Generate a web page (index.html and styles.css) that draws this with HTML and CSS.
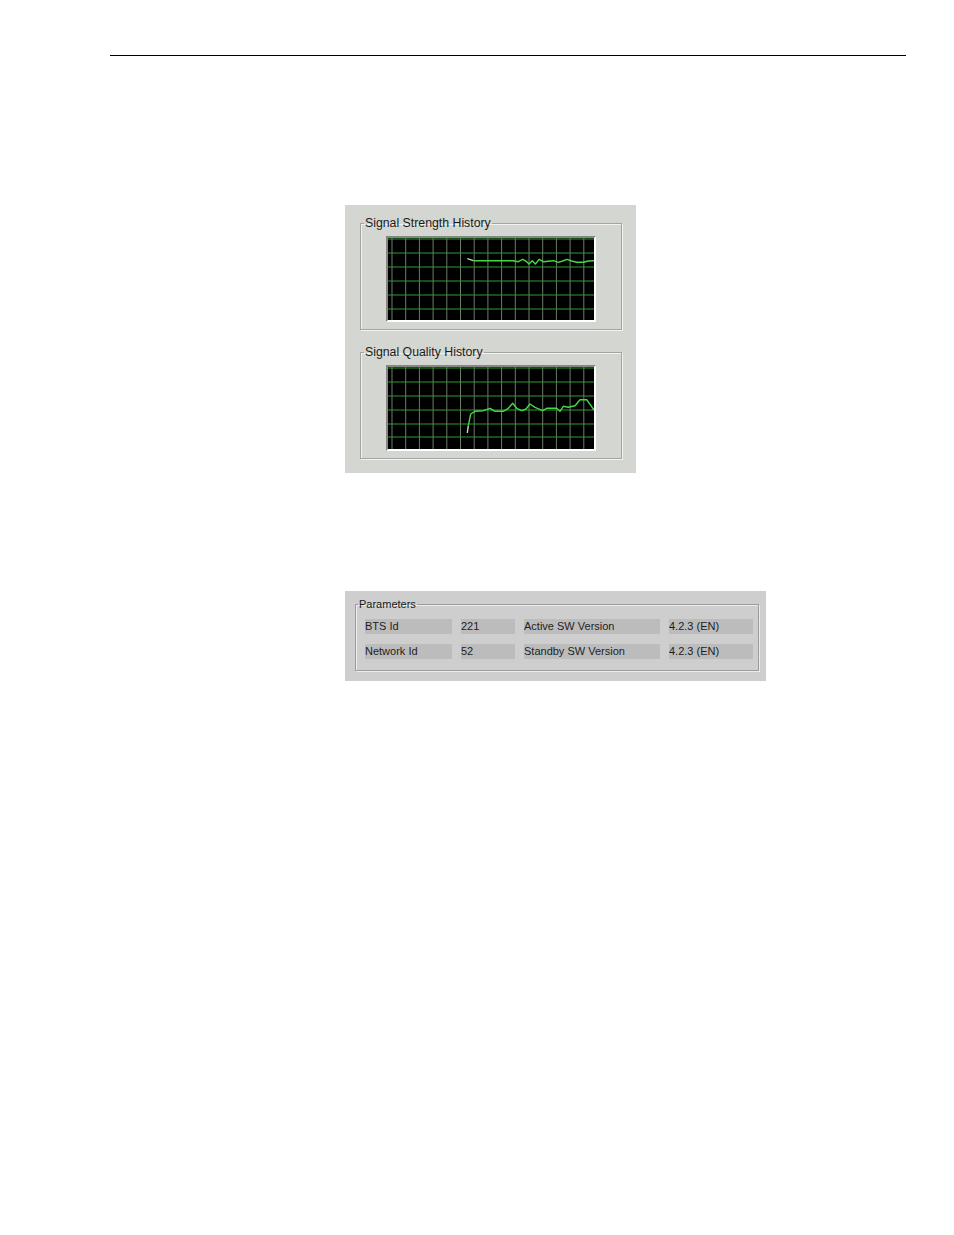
FILE: index.html
```html
<!DOCTYPE html>
<html>
<head>
<meta charset="utf-8">
<link rel="stylesheet" href="styles.css">
</head>
<body>
<div class="page">
  <div class="rule"></div>

  <div class="panel history">
    <fieldset class="group">
      <legend>Signal Strength History</legend>
      <div class="chart">
        <svg width="206" height="82" viewBox="0 0 206 82">
          <g class="vgrid">
            <line x1="4" y1="0" x2="4" y2="82"/><line x1="17.7" y1="0" x2="17.7" y2="82"/>
            <line x1="31.4" y1="0" x2="31.4" y2="82"/><line x1="45.1" y1="0" x2="45.1" y2="82"/>
            <line x1="58.8" y1="0" x2="58.8" y2="82"/><line x1="72.5" y1="0" x2="72.5" y2="82"/>
            <line x1="86.2" y1="0" x2="86.2" y2="82"/><line x1="99.9" y1="0" x2="99.9" y2="82"/>
            <line x1="113.6" y1="0" x2="113.6" y2="82"/><line x1="127.3" y1="0" x2="127.3" y2="82"/>
            <line x1="141" y1="0" x2="141" y2="82"/><line x1="154.7" y1="0" x2="154.7" y2="82"/>
            <line x1="168.4" y1="0" x2="168.4" y2="82"/><line x1="182.1" y1="0" x2="182.1" y2="82"/>
            <line x1="195.8" y1="0" x2="195.8" y2="82"/>
          </g>
          <g class="hgrid">
            <line x1="0" y1="1" x2="206" y2="1"/><line x1="0" y1="15" x2="206" y2="15"/>
            <line x1="0" y1="29" x2="206" y2="29"/><line x1="0" y1="43" x2="206" y2="43"/>
            <line x1="0" y1="57" x2="206" y2="57"/><line x1="0" y1="71" x2="206" y2="71"/>
          </g>
          <polyline class="start" points="79.3,20.7 85.3,22.7"/>
          <polyline class="data" points="85.3,22.7 125.3,22.7 130.3,23.7 134.7,21.3 138.7,23.7 141,26 144.3,22.7 147.3,26 151.3,21.3 155.3,23.7 165.3,22.7 170.3,24.3 174.7,23 178.7,21.3 183.7,23 188.7,24.3 195.3,24.3 200.3,23 206,22.7"/>
        </svg>
      </div>
    </fieldset>

    <fieldset class="group second">
      <legend>Signal Quality History</legend>
      <div class="chart">
        <svg width="206" height="82" viewBox="0 0 206 82">
          <g class="vgrid">
            <line x1="4" y1="0" x2="4" y2="82"/><line x1="17.7" y1="0" x2="17.7" y2="82"/>
            <line x1="31.4" y1="0" x2="31.4" y2="82"/><line x1="45.1" y1="0" x2="45.1" y2="82"/>
            <line x1="58.8" y1="0" x2="58.8" y2="82"/><line x1="72.5" y1="0" x2="72.5" y2="82"/>
            <line x1="86.2" y1="0" x2="86.2" y2="82"/><line x1="99.9" y1="0" x2="99.9" y2="82"/>
            <line x1="113.6" y1="0" x2="113.6" y2="82"/><line x1="127.3" y1="0" x2="127.3" y2="82"/>
            <line x1="141" y1="0" x2="141" y2="82"/><line x1="154.7" y1="0" x2="154.7" y2="82"/>
            <line x1="168.4" y1="0" x2="168.4" y2="82"/><line x1="182.1" y1="0" x2="182.1" y2="82"/>
            <line x1="195.8" y1="0" x2="195.8" y2="82"/>
          </g>
          <g class="hgrid">
            <line x1="0" y1="1" x2="206" y2="1"/><line x1="0" y1="15" x2="206" y2="15"/>
            <line x1="0" y1="29" x2="206" y2="29"/><line x1="0" y1="43" x2="206" y2="43"/>
            <line x1="0" y1="57" x2="206" y2="57"/><line x1="0" y1="70" x2="206" y2="70"/>
          </g>
          <polyline class="start" points="79.3,66 80.3,58.7"/>
          <polyline class="data" points="80.3,58.7 82.7,47 87,44.3 95.3,43.7 102,41.3 107,44.3 115.3,44.3 120.3,41.3 124.7,36.3 128.7,41.3 133.7,43.7 138,42 142,37 147,40.3 154.7,43.7 158.7,41.3 168.7,41.3 172,44.3 175.3,39.3 180.3,40.3 187,38.7 192,32.7 198.7,32.7 206,43"/>
        </svg>
      </div>
    </fieldset>
  </div>

  <div class="panel params">
    <fieldset class="pgroup">
      <legend>Parameters</legend>
      <div class="grid">
        <div class="cell">BTS Id</div>
        <div class="cell">221</div>
        <div class="cell">Active SW Version</div>
        <div class="cell">4.2.3 (EN)</div>
        <div class="cell">Network Id</div>
        <div class="cell">52</div>
        <div class="cell">Standby SW Version</div>
        <div class="cell">4.2.3 (EN)</div>
      </div>
    </fieldset>
  </div>
</div>
</body>
</html>
```

FILE: styles.css
```css
html, body {
  margin: 0;
  padding: 0;
  background: #ffffff;
}

.page {
  width: 954px;
  height: 1235px;
  padding-top: 55px;
  box-sizing: border-box;
  font-family: "Liberation Sans", Arial, sans-serif;
  color: #1e1e1e;
}

.rule {
  margin-left: 110px;
  width: 796px;
  height: 0;
  border-top: 1.5px solid #000000;
}

.panel {
  box-sizing: border-box;
}

.history {
  margin: 149px 0 0 345px;
  width: 291px;
  height: 268px;
  background: #d4d6d1;
  padding: 11px 14px 0 15px;
}

.group {
  margin: 0;
  min-width: 0;
  width: 262px;
  box-sizing: border-box;
  border: 1px solid #a3a5a1;
  box-shadow: 1px 1px 0 #f2f3f0, inset 1px 1px 0 #f2f3f0;
  padding: 6px 0 7px 0;
}

.group.second {
  margin-top: 15px;
}

.group legend {
  font-size: 12.3px;
  line-height: 14px;
  padding: 0 1px;
  margin-left: 3px;
  color: #1a1a1a;
}

.chart {
  margin-left: 25px;
  width: 206px;
  height: 82px;
  border-top: 2px solid #858783;
  border-left: 2px solid #858783;
  border-right: 2px solid #ffffff;
  border-bottom: 2px solid #ffffff;
  background: #000000;
}

.chart svg {
  display: block;
}

.vgrid line {
  stroke: #6c7c6c;
  stroke-width: 1;
}

.hgrid line {
  stroke: #2f9a2f;
  stroke-width: 1;
}

.data {
  fill: none;
  stroke: #45d845;
  stroke-width: 1.4;
  stroke-linejoin: round;
}

.start {
  fill: none;
  stroke: #c8d8c8;
  stroke-width: 1.4;
}

.params {
  margin: 118px 0 0 345px;
  width: 421px;
  height: 90px;
  background: #cecece;
  padding: 7px 7px 0 10px;
}

.pgroup {
  margin: 0;
  min-width: 0;
  width: 404px;
  box-sizing: border-box;
  border: 1px solid #9c9c9c;
  box-shadow: 1px 1px 0 #ececec, inset 1px 1px 0 #ececec;
  padding: 8px 0 11px 0;
}

.pgroup legend {
  font-size: 11px;
  line-height: 13px;
  padding: 0 1px;
  margin-left: 2px;
  color: #1a1a1a;
}

.grid {
  margin-left: 9px;
  display: grid;
  grid-template-columns: 87px 54px 136px 84px;
  column-gap: 9px;
  row-gap: 10px;
}

.cell {
  height: 15px;
  line-height: 15px;
  font-size: 11px;
  background: #bcbcbc;
  padding-left: 0;
  white-space: nowrap;
  color: #1e1e1e;
}
```
